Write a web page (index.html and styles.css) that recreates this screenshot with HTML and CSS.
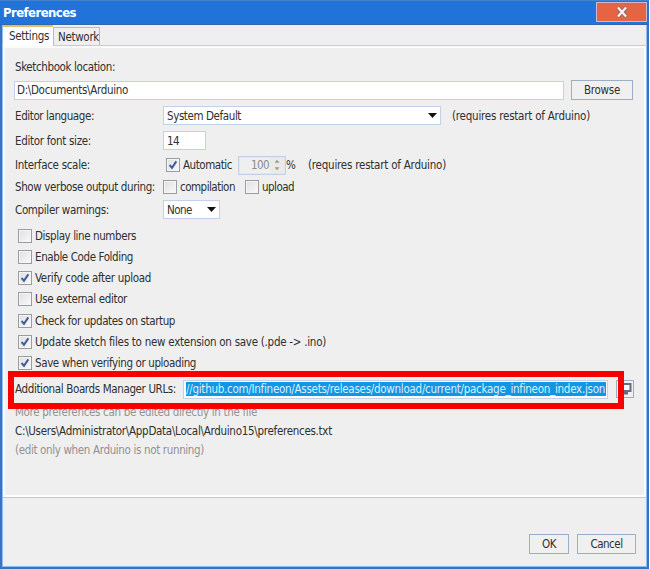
FILE: index.html
```html
<!DOCTYPE html>
<html lang="en">
<head>
<meta charset="utf-8">
<title>Preferences</title>
<link rel="stylesheet" href="styles.css">
</head>
<body>
<div class="window">
  <header class="titlebar">
    <h1 class="title"><span class="t" data-w="73">Preferences</span></h1>
    <button class="close" aria-label="Close"><svg width="12" height="12" viewBox="0 0 12 12"><path class="x-edge" d="M2 1.5 10 10.5M10 1.5 2 10.5"/><path class="x-face" d="M2 1.5 10 10.5M10 1.5 2 10.5"/></svg></button>
  </header>
  <nav class="tabs">
    <div class="tab active"><span class="t" data-w="40">Settings</span></div>
    <div class="tab"><span class="t" data-w="41">Network</span></div>
  </nav>
  <main class="panel">
    <div class="row location-label"><span class="t" data-w="100">Sketchbook location:</span></div>
    <div class="row location">
      <div class="field path"><span class="t" data-w="111">D:\Documents\Arduino</span></div>
      <button class="button browse"><span class="t" data-w="36">Browse</span></button>
    </div>
    <div class="row language">
      <label class="label"><span class="t" data-w="79">Editor language:</span></label>
      <div class="field select wide"><span class="t" data-w="74">System Default</span><i class="arrow"></i></div>
      <span class="note t" data-w="138">(requires restart of Arduino)</span>
    </div>
    <div class="row fontsize">
      <label class="label"><span class="t" data-w="76">Editor font size:</span></label>
      <div class="field size"><span class="t" data-w="12">14</span></div>
    </div>
    <div class="row scale">
      <label class="label"><span class="t" data-w="75">Interface scale:</span></label>
      <i class="box auto checked"><svg width="10" height="10" viewBox="0 0 10 10"><path d="M1.6 5 4 7.8 8.3 1.4"/></svg></i>
      <span class="t" data-w="49">Automatic</span>
      <div class="spinner"><span class="t" data-w="18">100</span><div class="steps"><i class="up"></i><i class="down"></i></div></div>
      <span class="t percent" data-w="10">%</span>
      <span class="t scale-note" data-w="138">(requires restart of Arduino)</span>
    </div>
    <div class="row verbose">
      <label class="label"><span class="t" data-w="140">Show verbose output during:</span></label>
      <i class="box"></i><span class="t" data-w="55">compilation</span>
      <i class="box upload"></i><span class="t" data-w="32">upload</span>
    </div>
    <div class="row warnings">
      <label class="label"><span class="t" data-w="94">Compiler warnings:</span></label>
      <div class="field select small"><span class="t" data-w="25">None</span><i class="arrow"></i></div>
    </div>
    <div class="options">
      <div class="option"><i class="box"></i><span class="t" data-w="101">Display line numbers</span></div>
      <div class="option"><i class="box"></i><span class="t" data-w="98">Enable Code Folding</span></div>
      <div class="option"><i class="box"><svg width="10" height="10" viewBox="0 0 10 10"><path d="M1.6 5 4 7.8 8.3 1.4"/></svg></i><span class="t" data-w="116">Verify code after upload</span></div>
      <div class="option"><i class="box"></i><span class="t" data-w="92">Use external editor</span></div>
      <div class="option"><i class="box"><svg width="10" height="10" viewBox="0 0 10 10"><path d="M1.6 5 4 7.8 8.3 1.4"/></svg></i><span class="t" data-w="140">Check for updates on startup</span></div>
      <div class="option"><i class="box"><svg width="10" height="10" viewBox="0 0 10 10"><path d="M1.6 5 4 7.8 8.3 1.4"/></svg></i><span class="t" data-w="291">Update sketch files to new extension on save (.pde -&gt; .ino)</span></div>
      <div class="option"><i class="box"><svg width="10" height="10" viewBox="0 0 10 10"><path d="M1.6 5 4 7.8 8.3 1.4"/></svg></i><span class="t" data-w="161">Save when verifying or uploading</span></div>
    </div>
    <div class="row urls">
      <label class="label"><span class="t" data-w="161">Additional Boards Manager URLs:</span></label>
      <div class="field url"><span class="selection"><span class="t" data-w="419">//github.com/Infineon/Assets/releases/download/current/package_infineon_index.json</span></span></div>
      <button class="button expand" aria-label="Edit URLs"><svg width="15" height="15" viewBox="0 0 15 15"><path class="screen" d="M1 1h12.500v9H1z"/><path class="screen-face" d="M3 3h8.500v5H3z"/><path class="screen" d="M5 10h5v2.500H5z"/></svg></button>
      <div class="highlight"></div>
    </div>
    <div class="hints">
      <div class="hint"><span class="t" data-w="242">More preferences can be edited directly in the file</span></div>
      <div class="hint file"><span class="t" data-w="317">C:\Users\Administrator\AppData\Local\Arduino15\preferences.txt</span></div>
      <div class="hint"><span class="t" data-w="189">(edit only when Arduino is not running)</span></div>
    </div>
  </main>
  <footer class="footer">
    <button class="button ok"><span class="t" data-w="14">OK</span></button>
    <button class="button cancel"><span class="t" data-w="32">Cancel</span></button>
  </footer>
</div>
<script src="script.js"></script>
</body>
</html>
```

FILE: script.js
```js
// Tighten or loosen the tracking of each label to its nominal width.
document.querySelectorAll('.t').forEach(function (label) {
  var gap = (Number(label.dataset.w) - label.getBoundingClientRect().width) / label.textContent.length;
  label.style.letterSpacing = gap.toFixed(3) + 'px';
});
```

FILE: styles.css
```css
* { box-sizing: border-box; }
body { margin: 0; background: #fff; color: #303030; font: 11.5px/16px "DejaVu Sans Condensed", "DejaVu Sans", sans-serif; font-stretch: condensed; overflow: hidden; }
button { font: inherit; color: inherit; margin: 0; padding: 0; }
i { display: block; flex: none; }
svg { display: block; flex: none; }
.t { white-space: nowrap; flex: none; }

.window { width: 649px; height: 569px; display: flex; flex-direction: column; background: #efefef; border: solid #3973c4; border-width: 0 2px 2px; box-shadow: inset 1px 0 #8fbdf2, inset -1px -1px #8fbdf2; }
.titlebar { height: 25px; flex: none; margin: 0 -2px; padding: 2px 2px 0 3px; display: flex; justify-content: space-between; background: #2173d9; border-top: 1px solid #4382cf; border-bottom: 1px solid #3267ad; }
.title { margin: 1px 0 0; color: #fff; font-size: 13px; line-height: 18px; font-weight: bold; }
.close { width: 51px; height: 20px; margin-top: -1px; display: flex; align-items: center; justify-content: center; background: #e46443; border: 1px solid #cfb9d0; }
.x-edge { stroke: #8b6364; stroke-width: 4; }
.x-face { stroke: #f5f5f5; stroke-width: 2.300; }

.tabs { height: 21px; flex: none; display: flex; align-items: flex-end; padding-left: 1px; border-bottom: 1px solid #c8cacd; }
.tab { height: 18px; width: 47px; padding: 1px 0 0 4px; border: 1px solid #b9bbbd; border-bottom: 0; }
.tab.active { height: 21px; width: 50px; padding: 1px 0 0 6px; margin-bottom: -1px; background: #fff; border: 0; border-top: 2px solid #e6bb68; }

.panel { height: 451px; flex: none; margin: 0 1px; padding: 11px 13px 0 9px; border: 2px solid #fbfbfb; border-bottom-color: #fff; box-shadow: 0 1px #c6c6c6; }
.row { display: flex; align-items: center; }
.label { width: 149px; flex: none; display: flex; padding-left: 1px; }
.field { height: 19px; background: #fff; border: 1px solid #c2d0e8; display: flex; align-items: center; padding-left: 3px; flex: none; }
.button { height: 20px; flex: none; display: flex; align-items: center; justify-content: center; border: 1px solid #9aafc5; background: #f0f0f0; }
.location-label { height: 16px; padding-left: 1px; }
.location { height: 20px; margin-top: 5px; }
.path { width: 550px; padding-left: 2px; }
.browse { width: 62px; margin-left: 7px; }
.language { height: 19px; margin-top: 6px; }
.wide { width: 278px; }
.select { justify-content: space-between; padding-right: 3px; }
.arrow { width: 9px; height: 5px; background: #111; clip-path: polygon(0 0, 100% 0, 50% 100%); }
.note { margin-left: 11px; }
.fontsize { height: 19px; margin-top: 6px; }
.size { width: 43px; }
.scale { height: 20px; margin-top: 5px; }
.box { width: 14px; height: 14px; border: 1px solid #999da2; background: linear-gradient(135deg, #dedfe1, #fafafa); box-shadow: inset 0 0 0 1px #f5f5f5; display: flex; align-items: center; justify-content: center; margin-right: 3px; }
.box path { fill: none; stroke: #425b9b; stroke-width: 2; }
.auto { margin-left: 3px; }
.spinner { width: 48px; height: 19px; margin-left: 6px; border: 1px solid #c2d0e8; box-shadow: inset 0 0 0 1px #e2e7ef; display: flex; align-items: center; justify-content: flex-end; color: #8b8b8b; }
.steps { width: 14px; height: 15px; margin: 0 1px; display: flex; flex-direction: column; align-items: center; justify-content: space-around; background: #eceae5; }
.up, .down { width: 5px; height: 3px; background: #999; clip-path: polygon(50% 0, 100% 100%, 0 100%); }
.down { clip-path: polygon(0 0, 100% 0, 50% 100%); }
.scale-note { margin-left: 12px; }
.verbose { height: 16px; margin-top: 4px; }
.upload { margin-left: 10px; }
.warnings { height: 19px; margin-top: 5px; }
.small { width: 57px; }
.options { margin-top: 6px; padding-left: 4px; }
.option { height: 21.25px; display: flex; align-items: center; }
.urls { position: relative; height: 19px; margin-top: 6px; }
.urls .label { width: 169px; }
.url { width: 425px; padding-left: 2px; }
.selection { height: 14px; width: 420px; display: flex; align-items: center; background: #1296e4; color: #d8f0ff; }
.expand { width: 18px; height: 18px; margin-left: 8px; }
.screen { fill: #666a82; }
.screen-face { fill: #f5f8fb; }
.highlight { position: absolute; left: -6px; top: -9px; width: 616px; height: 38px; border: 6px solid #f80000; }
.hints { margin-top: 4px; padding-left: 1px; color: #929292; }
.hint { height: 19.300px; line-height: 19px; display: flex; }
.hints .file { color: #303030; }
.footer { flex: 1; display: flex; justify-content: flex-end; gap: 8px; padding: 37px 11px 0 0; }
.ok { width: 40px; }
.cancel { width: 59px; }
```
